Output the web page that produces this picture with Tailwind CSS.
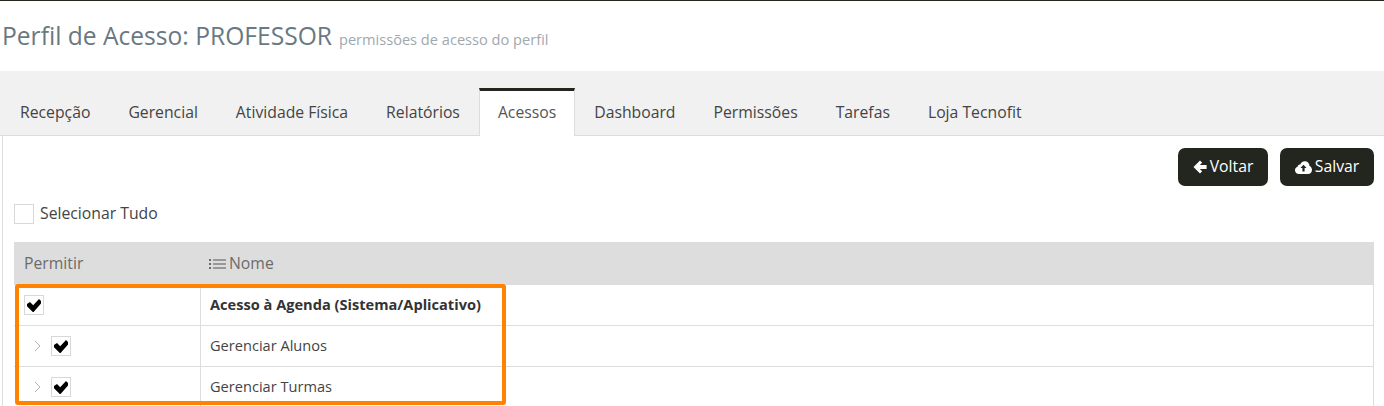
<!DOCTYPE html>
<html>
<head>
<meta charset="utf-8">
<script src="https://cdn.jsdelivr.net/npm/@tailwindcss/browser@4"></script>
</head>
<body class="bg-white overflow-hidden font-['Open_Sans',sans-serif] text-[#333]">
<div class="h-[406px] overflow-hidden relative border-t border-[#23261f]">
  <div class="h-[70px] pl-[2px] pt-[18px] flex items-baseline gap-[7px] text-[#697882]">
    <span class="text-[24.6px] leading-[33px]">Perfil de Acesso: PROFESSOR</span>
    <span class="text-[14.6px] text-[#a0a8ae]">permissões de acesso do perfil</span>
  </div>
  <div class="h-[65px] bg-[#f1f1f1] pt-[17px] flex items-start border-b border-[#dddddd]">
    <div class="flex text-[15.75px] text-[#444] pl-[1px] h-[48px]">
      <span class="px-[19px] pt-[13px]">Recepção</span>
      <span class="px-[19px] pt-[13px]">Gerencial</span>
      <span class="px-[19px] pt-[13px]">Atividade Física</span>
      <span class="px-[19px] pt-[13px]">Relatórios</span>
      <span class="px-[18px] pt-[10px] bg-white border-t-[3px] border-x border-x-[#dddddd] border-t-[#23261f] text-[#555] h-[48px] relative z-10">Acessos</span>
      <span class="px-[19px] pt-[13px]">Dashboard</span>
      <span class="px-[19px] pt-[13px]">Permissões</span>
      <span class="px-[19px] pt-[13px]">Tarefas</span>
      <span class="px-[19px] pt-[13px]">Loja Tecnofit</span>
    </div>
  </div>
  <div class="ml-[2px] border-l border-[#dddddd] pl-[11px] pr-[10px]">
    <div class="flex justify-end gap-[12px] pt-[12px]">
      <button class="h-[38px] w-[90px] rounded-[7px] bg-[#23261f] text-white text-[15.75px] flex items-center justify-center gap-[3px]">
        <svg width="14" height="14" viewBox="0 0 14 14" fill="white"><path d="M7 .6 9.2 2.8 6.8 5.1H13.6V8.9H6.8L9.2 11.2 7 13.4.5 7Z"/></svg>Voltar
      </button>
      <button class="h-[38px] w-[94px] rounded-[7px] bg-[#23261f] text-white text-[15.75px] flex items-center justify-center gap-[3px]">
        <svg width="17" height="13" viewBox="0 0 17 13"><path fill="white" d="M4 13C1.8 13 0 11.4 0 9.3 0 7.6 1 6.3 2.6 5.8 2.7 4.4 3.9 3.4 5.2 3.6 6 1.5 7.8.3 9.8.3 12.4.3 14.4 2.3 14.5 5 16 5.6 17 7.2 17 8.9 17 11.2 15.2 13 13 13Z"/><path fill="#23261f" d="M8.5 3.8 11.6 7H9.6V10.5H7.4V7H5.4Z"/></svg>Salvar
      </button>
    </div>
    <div class="flex items-center gap-[6px] mt-[18px] h-[20px]">
      <span class="w-[20px] h-[20px] border border-[#d8d8d8] bg-white"></span>
      <span class="text-[15.75px] text-[#444]">Selecionar Tudo</span>
    </div>
    <div class="mt-[18px] text-[14.6px]">
      <div class="h-[43px] bg-[#dddddd] flex items-center text-[#6b6b6b] text-[15.75px]">
        <span class="w-[187px] pl-[10px]">Permitir</span>
        <span class="pl-[8px] flex items-center gap-[3px]">
          <svg width="17" height="12" viewBox="0 0 17 12" fill="#6b6b6b"><rect x="0" y="1" width="2" height="2"/><rect x="0" y="5" width="2" height="2"/><rect x="0" y="9" width="2" height="2"/><rect x="4" y="1.4" width="13" height="1.2"/><rect x="4" y="5.4" width="13" height="1.2"/><rect x="4" y="9.4" width="13" height="1.2"/></svg>Nome
        </span>
      </div>
      <div class="h-[41px] flex border-b border-[#dddddd] border-r">
        <div class="w-[187px] border-r border-[#dddddd] flex items-center pl-[10px]">
          <span class="w-[20px] h-[20px] border border-[#d8d8d8] flex items-center justify-center">
            <svg width="14" height="13" viewBox="0 0 14 13"><path d="M0 5 3 3 6.2 6.2 12 0 14 2V4.5L6.6 13H5.8L0 7.2Z" fill="#000"/></svg>
          </span>
        </div>
        <div class="pl-[9px] flex items-center font-bold">Acesso à Agenda (Sistema/Aplicativo)</div>
      </div>
      <div class="h-[41px] flex border-b border-[#dddddd] border-r">
        <div class="w-[187px] border-r border-[#dddddd] flex items-center pl-[20px] gap-[10px]">
          <svg width="7" height="12" viewBox="0 0 7 12" fill="none" stroke="#b9b3ad" stroke-width="1"><path d="M1 1 6 6 1 11"/></svg>
          <span class="w-[20px] h-[20px] border border-[#d8d8d8] flex items-center justify-center">
            <svg width="14" height="13" viewBox="0 0 14 13"><path d="M0 5 3 3 6.2 6.2 12 0 14 2V4.5L6.6 13H5.8L0 7.2Z" fill="#000"/></svg>
          </span>
        </div>
        <div class="pl-[9px] flex items-center text-[#444]">Gerenciar Alunos</div>
      </div>
      <div class="h-[41px] flex border-b border-[#dddddd] border-r">
        <div class="w-[187px] border-r border-[#dddddd] flex items-center pl-[20px] gap-[10px]">
          <svg width="7" height="12" viewBox="0 0 7 12" fill="none" stroke="#b9b3ad" stroke-width="1"><path d="M1 1 6 6 1 11"/></svg>
          <span class="w-[20px] h-[20px] border border-[#d8d8d8] flex items-center justify-center">
            <svg width="14" height="13" viewBox="0 0 14 13"><path d="M0 5 3 3 6.2 6.2 12 0 14 2V4.5L6.6 13H5.8L0 7.2Z" fill="#000"/></svg>
          </span>
        </div>
        <div class="pl-[9px] flex items-center text-[#444]">Gerenciar Turmas</div>
      </div>
    </div>
  </div>
  <div class="absolute left-[15px] top-[283px] w-[491px] h-[121px] border-[4px] border-[#ff8300] rounded-[3px] pointer-events-none"></div>
</div>
</body>
</html>
